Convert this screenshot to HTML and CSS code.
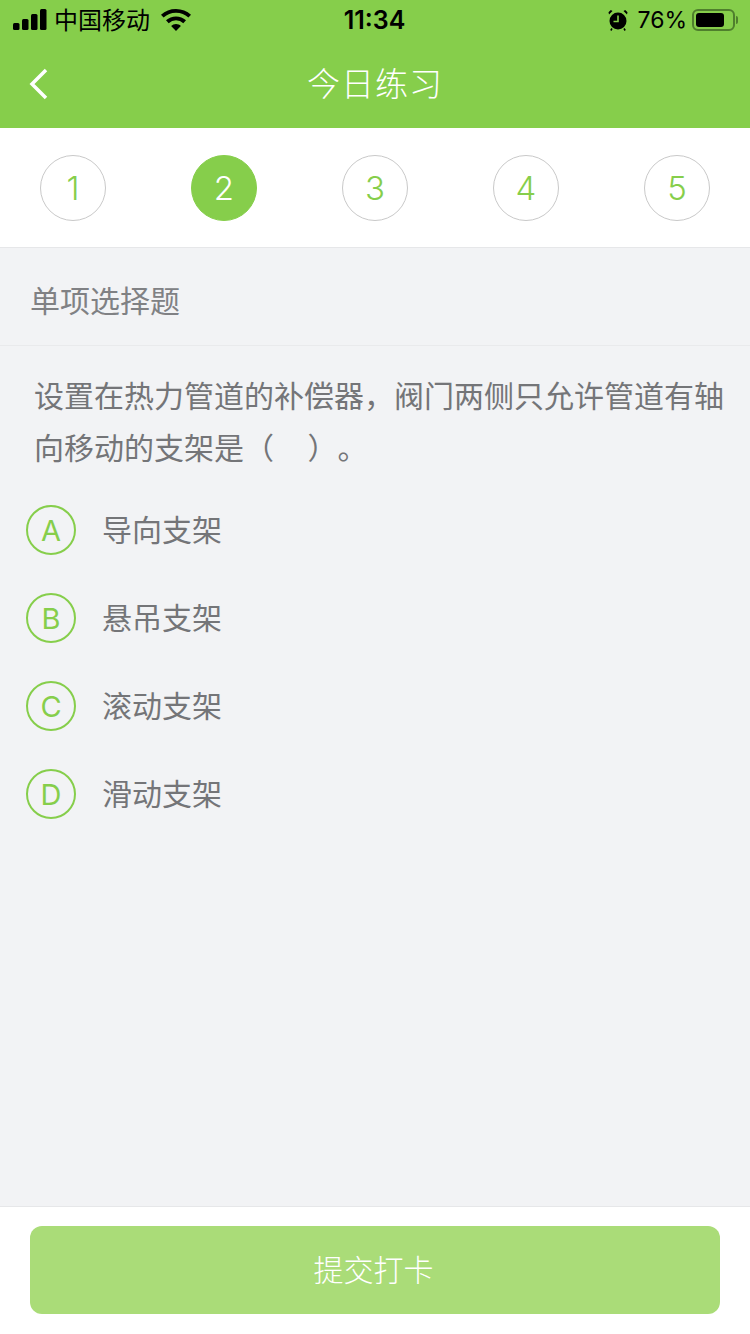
FILE: index.html
```html
<!DOCTYPE html>
<html lang="zh">
<head>
<meta charset="utf-8">
<title>今日练习</title>
<link rel="stylesheet" href="styles.css">
</head>
<body>
<div class="page">
  <header class="header">
    <div class="status">
      <div class="status-left">
        <svg class="signal" width="34" height="21" viewBox="0 0 34 21"><rect x="0" y="14" width="6.500" height="7" rx="1.500"/><rect x="9" y="10" width="6.500" height="11" rx="1.500"/><rect x="18" y="5" width="6.500" height="16" rx="1.500"/><rect x="27" y="0" width="6.500" height="21" rx="1.500"/></svg>
        <span class="carrier">中国移动</span>
        <svg class="wifi" width="30" height="22" viewBox="0 0 30 22"><path d="M15 0c5.800 0 11 2.200 15 5.800l-2.600 2.800A18.200 18.200 0 0 0 15 3.800 18.200 18.200 0 0 0 2.600 8.600L0 5.800A22.200 22.200 0 0 1 15 0z"/><path d="M15 7.500c3.800 0 7.300 1.400 10 3.800l-2.700 2.900A11 11 0 0 0 15 11.300a11 11 0 0 0-7.300 2.900L5 11.300a15 15 0 0 1 10-3.800z"/><path d="M15 15c1.900 0 3.600.7 4.900 1.900L15 22l-4.900-5.100A7.200 7.200 0 0 1 15 15z"/></svg>
      </div>
      <div class="time">11:34</div>
      <div class="status-right">
        <svg class="alarm" width="20" height="22" viewBox="0 0 20 22"><circle cx="10" cy="12" r="8.500"/><path d="M1 5.500 4.500 2 2.800 1 .5 3.300z M19 5.500 15.500 2l1.700-1 2.300 2.300z"/><path d="M10 6.500V12.500H5.500" fill="none" stroke="#86ce4b" stroke-width="1.600"/><path d="M4 19.500 2.800 21.500M16 19.500l1.200 2" stroke="#000" stroke-width="1.500"/></svg>
        <span class="percent">76%</span>
        <div class="battery"><div class="battery-fill"></div></div>
        <div class="battery-tip"></div>
      </div>
    </div>
    <div class="nav">
      <svg class="back" width="20" height="32" viewBox="0 0 20 32"><path d="M17 2 3 16l14 14" fill="none" stroke="#fff" stroke-width="3.500"/></svg>
      <h1 class="nav-title">今日练习</h1>
    </div>
  </header>

  <nav class="steps">
    <div class="step">1</div>
    <div class="step step-active">2</div>
    <div class="step">3</div>
    <div class="step">4</div>
    <div class="step">5</div>
  </nav>

  <main class="main">
    <div class="type">单项选择题</div>
    <p class="question">设置在热力管道的补偿器，阀门两侧只允许管道有轴向移动的支架是（&nbsp;&nbsp;&nbsp;&nbsp;&nbsp;）&#8203;。</p>
    <ul class="options">
      <li class="option"><span class="letter">A</span><span class="option-text">导向支架</span></li>
      <li class="option"><span class="letter">B</span><span class="option-text">悬吊支架</span></li>
      <li class="option"><span class="letter">C</span><span class="option-text">滚动支架</span></li>
      <li class="option"><span class="letter">D</span><span class="option-text">滑动支架</span></li>
    </ul>
  </main>

  <footer class="footer">
    <button class="submit" type="button">提交打卡</button>
  </footer>
</div>
</body>
</html>
```
FILE: styles.css
```css
* { box-sizing: border-box; }
html, body { margin: 0; padding: 0; }
body {
  font-family: "Inter", "Liberation Sans", "Noto Sans CJK SC", sans-serif;
  background: #f2f3f5;
}
.page {
  width: 750px;
  height: 1334px;
  display: flex;
  flex-direction: column;
  overflow: hidden;
}
.header { background: #86ce4b; height: 128px; flex: none; }
.status {
  height: 40px;
  display: grid;
  grid-template-columns: 1fr auto 1fr;
  align-items: center;
  padding: 0 12px 0 13px;
  color: #000;
}
.status-left { display: flex; align-items: center; }
.signal { margin-right: 7px; margin-top: -1px; }
.carrier { font-size: 24px; line-height: 38px; height: 40px; font-family: "Noto Sans CJK SC", sans-serif; }
.wifi { margin-left: 11px; margin-top: 0; }
.time { font-size: 25px; font-weight: 600; line-height: 41px; height: 40px; margin-left: -2px; font-family: "Inter", sans-serif; }
.status-right { display: flex; align-items: center; justify-content: flex-end; }
.alarm { margin-right: 9px; }
.percent { font-size: 23px; line-height: 41px; height: 40px; margin-right: 5px; font-family: "Inter", sans-serif; }
.battery {
  width: 43px;
  height: 22px;
  border: 2px solid #4f7f2d;
  border-radius: 6px;
  padding: 2px;
}
.battery-fill { width: 28px; height: 14px; background: #000; border-radius: 3px; }
.battery-tip { width: 2px; height: 8px; background: #4f7f2d; border-radius: 0 2px 2px 0; margin-left: 1px; }
.nav {
  height: 88px;
  position: relative;
  display: flex;
  align-items: center;
  justify-content: center;
  padding-bottom: 4px;
}
.back { position: absolute; left: 29px; top: 28px; }
.nav-title {
  margin: 0;
  font-size: 33px;
  font-weight: 300;
  color: #fff;
  letter-spacing: 1px;
  font-family: "Noto Sans CJK SC", sans-serif;
}
.steps {
  flex: none;
  height: 120px;
  background: #fff;
  border-bottom: 1px solid #e6e7e9;
  padding: 27px 40px 0;
  display: flex;
  justify-content: space-between;
  align-items: flex-start;
}
.step {
  width: 66px;
  height: 66px;
  border-radius: 50%;
  border: 1px solid #c9c9c9;
  color: #86ce4b;
  font-size: 33px;
  display: flex;
  align-items: center;
  justify-content: center;
  font-weight: 300;
}
.step-active { background: #86ce4b; border-color: #86ce4b; color: #fff; }
.main { flex: 1; background: #f2f3f5; min-height: 0; }
.type {
  height: 98px;
  border-bottom: 1px solid #e9eaec;
  padding-left: 30px;
  font-size: 30px;
  line-height: 103px;
  color: #808184;
  font-family: "Noto Sans CJK SC", sans-serif;
}
.question {
  margin: 0;
  padding: 22px 24px 0 34px;
  font-size: 30px;
  line-height: 52px;
  color: #747578;
  font-family: "Noto Sans CJK SC", sans-serif;
}
.options { list-style: none; margin: 0; padding: 33px 0 0 26px; }
.option { height: 88px; display: flex; align-items: flex-start; }
.letter {
  width: 50px;
  height: 50px;
  border-radius: 50%;
  border: 2px solid #86ce4b;
  color: #86ce4b;
  font-size: 29px;
  font-weight: 400;
  display: flex;
  align-items: center;
  justify-content: center;
  flex: none;
}
.option-text {
  margin-left: 26px;
  font-size: 30px;
  line-height: 46px;
  color: #747578;
  font-family: "Noto Sans CJK SC", sans-serif;
}
.footer {
  flex: none;
  height: 128px;
  background: #fff;
  border-top: 1px solid #e6e7e9;
  padding: 19px 30px 0;
}
.submit {
  display: block;
  width: 100%;
  height: 88px;
  border: 0;
  border-radius: 12px;
  background: #aadc78;
  color: #fff;
  font-size: 30px;
  font-family: "Noto Sans CJK SC", sans-serif;
  font-weight: 300;
  padding: 0 3px 4px 0;
}
```
